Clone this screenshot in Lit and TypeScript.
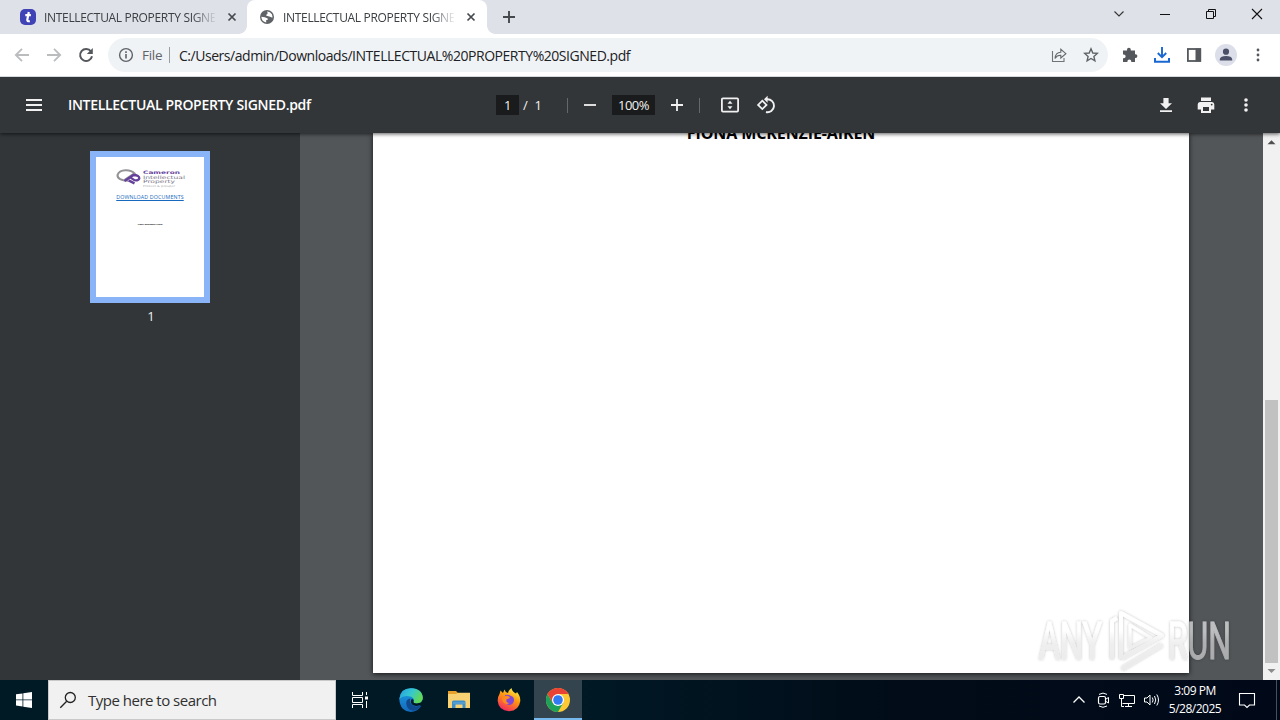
import { LitElement, html, css, svg } from "lit";
import { customElement } from "lit/decorators.js";

const icon = (w: number, h: number, body: unknown, cls = "") =>
  html`<svg class=${cls} width=${w} height=${h} viewBox="0 0 ${w} ${h}" fill="none">${body}</svg>`;

const closeX = svg`<path d="M1.5 1.5L8.5 8.5M8.5 1.5L1.5 8.5" stroke="#45494d" stroke-width="1.7"/>`;

@customElement("browser-tabs")
class BrowserTabs extends LitElement {
  static styles = css`
    :host { display: flex; height: 34px; background: #dee1e8; font: 12px "Open Sans", sans-serif; color: #3c4043; }
    svg { flex: none; display: block; }
    .tab { display: flex; align-items: center; box-sizing: border-box; padding: 0 0 0 20px; width: 247px; height: 34px; }
    .tab.active { width: 240px; padding-left: 12px; background: #fff; border-radius: 8px 8px 0 0; position: relative; }
    .tab.active::before, .tab.active::after { content: ""; position: absolute; bottom: 0; width: 8px; height: 8px; }
    .tab.active::before { left: -8px; background: radial-gradient(circle at 0 0, transparent 7.5px, #fff 8px); }
    .tab.active::after { right: -8px; background: radial-gradient(circle at 100% 0, transparent 7.5px, #fff 8px); }
    .title { width: 171px; margin: 0 12px 0 8px; overflow: hidden; white-space: nowrap; letter-spacing: -0.32px;
      -webkit-mask-image: linear-gradient(90deg, #000 148px, transparent 173px); mask-image: linear-gradient(90deg, #000 148px, transparent 173px); }
    .plus { margin: 10px 0 0 15px; }
    .win { display: flex; margin-left: auto; gap: 32px; padding: 7px 17px 0 0; }
  `;
  render() {
    return html`
      <div class="tab">
        ${icon(16, 16, svg`<rect width="16" height="16" rx="5" fill="#3f43b5"/><path d="M8.8 3L7.3 10.7Q7 12.7 9.8 12.1M5.3 6.2H10.9" stroke="#fff" stroke-width="2.2"/>`)}
        <div class="title">INTELLECTUAL PROPERTY SIGNED.pdf</div>${icon(10, 10, closeX)}
      </div>
      <div class="tab active">
        ${icon(16, 16, svg`<circle cx="8" cy="8" r="7" fill="#5f6368"/><path d="M2.3 7.8L5.7 8.2L8.3 9.2Q9.4 9.7 8.7 10.8L7.2 11.1V13.4Q2.8 12.8 2.3 7.8ZM8 2.4Q11 2.2 12.9 5.2L13.6 8.2Q12.9 9 11.7 8.1L10.3 7.6L7.4 6.8Q6.6 5.6 8.2 5.2L8.7 4.1Z" fill="#fff"/>`)}
        <div class="title">INTELLECTUAL PROPERTY SIGNED.pdf</div>${icon(10, 10, closeX)}
      </div>
      ${icon(14, 14, svg`<path d="M7 1V13M1 7H13" stroke="#45484c" stroke-width="1.9"/>`, "plus")}
      <div class="win">
        ${icon(12, 14, svg`<path d="M1.5 4.5L6 9L10.5 4.5" stroke="#333" stroke-width="1.1"/>`)}
        ${icon(14, 14, svg`<path d="M3 7.5H13" stroke="#111"/>`)}
        ${icon(14, 14, svg`<path d="M3.5 4.5H10.5V11.5H3.5ZM5.5 4.5V2.5H12.5V9.5H10.5" stroke="#111"/>`)}
        ${icon(14, 14, svg`<path d="M3 2L13 12M13 2L3 12" stroke="#111" stroke-width="1.1"/>`)}
      </div>`;
  }
}

@customElement("address-row")
class AddressRow extends LitElement {
  static styles = css`
    :host { display: flex; align-items: center; height: 42px; background: #fff; border-bottom: 1px solid #d5d8dc; font: 14px "Open Sans", sans-serif; color: #202124; }
    svg { flex: none; display: block; }
    .nav { display: flex; gap: 16px; padding-left: 14px; width: 94px; }
    .omni { display: flex; align-items: center; width: 1000px; height: 34px; border-radius: 17px; background: #f0f3f5; box-sizing: border-box; padding: 0 9px 0 10px; white-space: nowrap; }
    .file { color: #5f6368; margin-left: 8px; width: 27px; letter-spacing: -0.3px; font-size: 13.5px; }
    .sep { width: 1px; height: 16px; background: #9a9ea3; margin-right: 9px; }
    .url { flex: 1; letter-spacing: -0.46px; }
    .acts { display: flex; gap: 16px; }
    .right { display: flex; gap: 14px; align-items: center; margin-left: 13px; }
    .avatar { margin-left: -2px; }
  `;
  render() {
    return html`
      <div class="nav">
        ${icon(16, 16, svg`<path d="M15 8H2M8 1.8L1.8 8L8 14.2" stroke="#babcbe" stroke-width="1.8"/>`)}
        ${icon(16, 16, svg`<path d="M1 8H14M8 1.8L14.2 8L8 14.2" stroke="#babcbe" stroke-width="1.8"/>`)}
        ${icon(16, 16, svg`<path d="M13 4.5A6 6 0 1 0 14 9.2" stroke="#54585d" stroke-width="2"/><path d="M14.8 1V7H8.8Z" fill="#54585d"/>`)}
      </div>
      <div class="omni">
        ${icon(16, 16, svg`<circle cx="8" cy="8" r="6.4" stroke="#5f6368" stroke-width="1.4"/><path d="M8 7V11.5M8 4.3V5.9" stroke="#5f6368" stroke-width="1.6"/>`)}
        <span class="file">File</span><span class="sep"></span>
        <span class="url">C:/Users/admin/Downloads/INTELLECTUAL%20PROPERTY%20SIGNED.pdf</span>
        <div class="acts">
          ${icon(16, 16, svg`<path d="M1.5 4V14.5H13V11" stroke="#707478" stroke-width="1.1"/><path d="M4 11.5Q4.4 5.5 9.8 5.2V2.3L14.9 6.7L9.8 11V8.3Q6 8.1 4 11.5Z" stroke="#65696e" stroke-width="1.1"/>`)}
          ${icon(16, 16, svg`<path d="M8 1.8L9.8 6L14.3 6.4L10.9 9.4L11.9 13.8L8 11.5L4.1 13.8L5.1 9.4L1.7 6.4L6.2 6Z" stroke="#5f6368" stroke-width="1.4"/>`)}
        </div>
      </div>
      <div class="right">
        ${icon(18, 18, svg`<path d="M2 4.5H6V3.7A1.9 1.9 0 0 1 9.8 3.7V4.5H14V8.2H14.5A1.8 1.8 0 0 1 14.5 12H14V16H10.3V15.4A1.8 1.8 0 0 0 6.4 15.4V16H2V12.3H2.7A1.9 1.9 0 0 0 2.7 8.4H2Z" fill="#54585d"/>`)}
        ${icon(18, 18, svg`<path d="M9 1V11M4.8 7L9 11.2L13.2 7" stroke="#1967d2" stroke-width="1.9"/><path d="M2 12V15.8H16V12" stroke="#1967d2" stroke-width="2"/>`)}
        ${icon(18, 18, svg`<rect x="2.9" y="3" width="12.4" height="12" stroke="#54585d" stroke-width="1.8"/><rect x="10.5" y="2.5" width="5" height="13" fill="#54585d"/>`)}
        ${icon(22, 22, svg`<circle cx="11" cy="11" r="11" fill="#dcdfe9"/><circle cx="11" cy="7.7" r="3.1" fill="#4b4f67"/><path d="M4.8 16.5V15Q5.5 12 11 12Q16.5 12 17.2 15V16.5Z" fill="#4b4f67"/>`, "avatar")}
        ${icon(14, 16, svg`<circle cx="7" cy="3" r="1.4" fill="#54585d"/><circle cx="7" cy="8" r="1.4" fill="#54585d"/><circle cx="7" cy="13" r="1.4" fill="#54585d"/>`)}
      </div>`;
  }
}

@customElement("pdf-viewer")
class PdfViewer extends LitElement {
  static styles = css`
    :host { display: flex; flex-direction: column; height: 603px; font: 13px "Open Sans", sans-serif; color: #f1f1f1; position: relative; overflow: hidden; }
    svg { flex: none; display: block; }
    .bar { display: grid; grid-template-columns: 496px 1fr auto; align-items: center; height: 56px; background: #323639; box-shadow: 0 1px 4px rgba(0,0,0,.65); position: relative; z-index: 1; }
    .left, .mid, .acts { display: flex; align-items: center; }
    .left { padding-left: 26px; }
    .name { margin-left: 26px; font-size: 14px; font-weight: 600; letter-spacing: -0.32px; white-space: nowrap; color: #fff; line-height: 18px; padding-bottom: 1px; }
    .box { background: #191b1c; height: 20px; line-height: 20px; text-align: center; letter-spacing: -.5px; }
    .pg { width: 23px; }
    .of { margin-left: 4px; width: 44px; white-space: pre; }
    .zoom { width: 43px; margin: 0 14px; }
    .rule { width: 1px; height: 15px; background: #65686b; }
    .minus { margin-left: 14px; }
    .rule2 { margin: 0 20px 0 14px; }
    .rot { margin-left: 16px; }
    .acts { gap: 20px; padding-right: 28px; }
    .more { margin-left: 4px; }
    .main { display: flex; flex: 1; min-height: 0; }
    .side { width: 300px; background: #323639; display: flex; flex-direction: column; align-items: center; box-sizing: border-box; padding-top: 18px; }
    .thumb { box-sizing: border-box; width: 120px; height: 152px; border: 6px solid #8ab4f8; background: #fff; display: flex; flex-direction: column; align-items: center; }
    .thumb svg { margin: 11px 0 0 2px; }
    .link { color: #1769be; font-size: 5.3px; font-weight: 500; line-height: 7px; margin-top: 6px; text-decoration: underline; white-space: nowrap; letter-spacing: .14px; }
    .sig { color: #000; font-weight: 700; font-size: 2.1px; line-height: 4px; margin-top: 22px; white-space: nowrap; }
    .num { margin: 4px 0 0 2px; }
    .canvas { flex: 1; background: #525659; padding-left: 73px; }
    .page { width: 816px; height: 540px; background: #fff; box-shadow: 0 1px 5px rgba(0,0,0,.75); color: #000; display: flex; justify-content: center; }
    .signer { font: 700 16px/22px "Open Sans", sans-serif; margin-top: -11px; letter-spacing: -.1px; white-space: nowrap; }
    .scroll { width: 17px; background: #f1f1f1; display: flex; flex-direction: column; align-items: center; }
    .track { flex: 1; width: 13px; display: flex; align-items: flex-end; }
    .grip { width: 13px; height: 263px; background: #c1c1c1; }
  `;
  render() {
    return html`
      <div class="bar">
        <div class="left">
          ${icon(16, 12, svg`<path d="M0 1H16M0 6H16M0 11H16" stroke="#f1f1f1" stroke-width="2"/>`)}
          <span class="name">INTELLECTUAL PROPERTY SIGNED.pdf</span>
        </div>
        <div class="mid">
          <span class="box pg">1</span><span class="of">/  1</span><span class="rule"></span>
          ${icon(16, 16, svg`<path d="M2 8H14" stroke="#f1f1f1" stroke-width="1.8"/>`, "minus")}
          <span class="box zoom">100%</span>
          ${icon(16, 16, svg`<path d="M2 8H14M8 2V14" stroke="#f1f1f1" stroke-width="1.8"/>`)}
          <span class="rule rule2"></span>
          ${icon(20, 16, svg`<rect x="1.9" y="1.4" width="16.2" height="13.2" rx="1" stroke="#f1f1f1" stroke-width="1.8"/><path d="M10 3.7L12.5 6.7H7.5ZM10 12.3L12.5 9.3H7.5Z" fill="#f1f1f1"/>`)}
          ${icon(20, 20, svg`<path d="M6.3 5.7L10.5 9.9L6.3 14.1L2.1 9.9Z" stroke="#f1f1f1" stroke-width="1.8"/><path d="M9.5 4.2H11A6.5 6.5 0 1 1 10 17" stroke="#f1f1f1" stroke-width="1.9"/><path d="M11.6 .7V7.7L8 4.2Z" fill="#f1f1f1"/>`, "rot")}
        </div>
        <div class="acts">
          ${icon(20, 20, svg`<path d="M7.4 3H12.6V8.2H16L10 14L4 8.2H7.4ZM4 15.2H16V17H4Z" fill="#f1f1f1"/>`)}
          ${icon(20, 20, svg`<path d="M5 2.5H15V6H5ZM4 7H16Q18.3 7 18.3 9.5V14.5H15V18H5V14.5H1.7V9.5Q1.7 7 4 7ZM7 12V16H13V12Z" fill="#f1f1f1" fill-rule="evenodd"/><circle cx="15.7" cy="9.6" r=".9" fill="#323639"/>`)}
          ${icon(12, 20, svg`<circle cx="6" cy="5" r="1.8" fill="#f1f1f1"/><circle cx="6" cy="10" r="1.8" fill="#f1f1f1"/><circle cx="6" cy="15" r="1.8" fill="#f1f1f1"/>`, "more")}
        </div>
      </div>
      <div class="main">
        <div class="side">
          <div class="thumb">
            ${icon(70, 20, svg`
              <path d="M12 12.6Q1.3 12.4 1.5 7Q3 2.3 9.5 2.2Q15.5 2 18.5 5.4L9 11.6" stroke="#939397" stroke-width="2.1"/>
              <path d="M8.5 13L17.5 7Q23.5 7.3 23.3 10.3Q22.5 12.8 18.5 12.2L14.5 9.6M12.5 12.4L18.5 15.4" stroke="#65409b" stroke-width="2.3"/>
              <g font-family="DejaVu Sans, sans-serif" font-size="4.6">
                <text x="27" y="5.8" fill="#67439b" font-weight="700" textLength="37" lengthAdjust="spacingAndGlyphs">Cameron</text>
                <text x="27" y="10.6" fill="#77717f" textLength="42" lengthAdjust="spacingAndGlyphs">Intellectual</text>
                <text x="27" y="15.3" fill="#77717f" textLength="32" lengthAdjust="spacingAndGlyphs">Property</text>
                <text x="27" y="19.2" fill="#aaa" font-size="2.6" textLength="32" lengthAdjust="spacingAndGlyphs">Protect &amp; prosper</text>
              </g>`)}
            <div class="link">DOWNLOAD DOCUMENTS</div>
            <div class="sig">FIONA MCKENZIE-AIKEN</div>
          </div>
          <div class="num">1</div>
        </div>
        <div class="canvas"><div class="page"><div class="signer">FIONA MCKENZIE-AIKEN</div></div></div>
        <div class="scroll">
          ${icon(17, 17, svg`<path d="M4.5 11.3L8.5 7.3L12.5 11.3Z" fill="#505050"/>`)}
          <div class="track"><div class="grip"></div></div>
          ${icon(17, 17, svg`<path d="M4.5 6L8.5 10L12.5 6Z" fill="#8b8b8b"/>`)}
        </div>
      </div>`;
  }
}

@customElement("task-bar")
class TaskBar extends LitElement {
  static styles = css`
    :host { display: flex; height: 40px; background: linear-gradient(90deg, #001a25 0, #001925 45%, #010c18 70%, #010919 100%); font-family: "Open Sans", sans-serif; color: #fff; }
    svg { flex: none; display: block; }
    .cell { width: 48px; display: flex; align-items: center; justify-content: center; }
    .search { width: 288px; box-sizing: border-box; border: 1px solid #c9c9c9; background: #f1f1f1; color: #303030; display: flex; align-items: center; padding-left: 10px; gap: 11px; font-size: 15px; letter-spacing: -.5px; }
    .app { width: 50px; }
    .edge { margin-left: 4px; }
    .apps { display: flex; }
    .on { width: 48px; background: #34444e; box-shadow: inset 0 -2px #76b9ed; }
    .tray { display: flex; align-items: center; margin-left: auto; }
    .tray > svg { margin-right: 7px; }
    .clock { width: 56px; text-align: center; font-size: 12px; line-height: 18px; letter-spacing: -.5px; white-space: nowrap; margin: 0 15px 0 -1px; }
    .peek { width: 1px; height: 40px; background: #465060; margin: 0 3px 0 13px; }
  `;
  render() {
    return html`
      <div class="cell">${icon(16, 16, svg`<path d="M0 2.3L6.5 1.4V7.5H0ZM7.3 1.3L16 0V7.5H7.3ZM0 8.3H6.5V14.5L0 13.6ZM7.3 8.3H16V16L7.3 14.7Z" fill="#fff"/>`)}</div>
      <div class="search">${icon(18, 18, svg`<circle cx="11.3" cy="6.5" r="5" stroke="#222" stroke-width="1.3"/><path d="M7.7 10.2L1.3 16.8" stroke="#222" stroke-width="1.3"/>`)}<span>Type here to search</span></div>
      <div class="apps">
        <div class="cell">${icon(18, 16, svg`<path d="M1.5 0V3.5H11.5V0M1.5 16V12.5H11.5V16M1.5 5.5H11.5V10.5H1.5ZM15.5 0V3M15.5 9V16" stroke="#fff"/><rect x="14" y="4.5" width="3" height="3" fill="#fff"/>`)}</div>
        <div class="cell app"><svg class="edge" width="24" height="24" viewBox="0 0 24 24">
          <defs><linearGradient id="eg" x1="0" y1="0" x2="1" y2=".4"><stop offset="0" stop-color="#249de2"/><stop offset=".55" stop-color="#36c8cf"/><stop offset="1" stop-color="#62d957"/></linearGradient>
          <linearGradient id="eb" x1="0" y1="0" x2="0" y2="1"><stop offset="0" stop-color="#1b9fe3"/><stop offset="1" stop-color="#1469bb"/></linearGradient></defs>
          <path d="M.3 11Q1.5 .2 12 .2Q23.6 .8 23.8 10.3Q23.4 15.4 18 15.5L21.8 18.5Q18 23.9 12 23.9Q1 23.4 .3 11Z" fill="url(#eb)"/>
          <path d="M.3 11Q1.5 .2 12 .2Q23.6 .8 23.8 10.3Q23.4 15.4 17.8 15.5Q13.4 15.4 14.6 13.2Q15.7 10.4 12.2 8.8Q5 6.2 .3 11Z" fill="url(#eg)"/>
          <path d="M11.7 10.5Q6.8 10.8 7.2 16Q8.5 22.4 14.5 22.7Q19.5 22 21.8 18.2Q22.2 17.2 21 17.6Q15 19.8 11.9 15.8Q10.2 12.4 11.7 10.5Z" fill="#10498d"/>
          <path d="M14.7 12.8Q13.4 15.4 17.8 15.5Q19.8 15.4 21 14.8Q21 18.3 17 18Q12.5 17.5 11.8 14Q11.8 11.5 13 10.7Q15 11.5 14.7 12.8Z" fill="#001925"/></svg></div>
        <div class="cell app">${icon(24, 20, svg`<path d="M1 1H9L11 3H22V18H1Z" fill="#e8a12c"/><path d="M1 4H9L11 2.7H23V18H1Z" fill="#f8d272"/><path d="M5 18V12Q5 10.5 6.5 10.5H17Q18.5 10.5 18.5 12V18H15.5V14.5H8.5V18Z" fill="#3c8fcb"/><path d="M6 13H18" stroke="#68aad6"/>`)}</div>
        <div class="cell app"><svg width="24" height="24" viewBox="0 0 24 24">
          <defs><linearGradient id="fx" x1=".8" y1="0" x2=".3" y2="1"><stop offset="0" stop-color="#fff44f"/><stop offset=".45" stop-color="#ff980e"/><stop offset="1" stop-color="#f52663"/></linearGradient></defs>
          <path d="M2.5 6L3.5 2.5L6 5L7.5 1.5Q8 4 11 5Q11.5 2 14.5 0Q15 3.5 19 5.5L20 4Q23.5 8 23.3 13Q22 22.8 12 23.2Q1.5 22.5 .7 13Q.5 9 2.5 6Z" fill="url(#fx)"/>
          <path d="M8 7Q11 6.2 13 7.5Q17.5 8.5 17 13Q15.7 17.3 11.5 17Q7.7 16 7 12.5Z" fill="#8148d8"/><path d="M5 10Q8 6 13 9Q12.5 11 9.5 11.3Q8.5 15 12.5 15Q8 18 5.5 13Z" fill="#ff8a20"/></svg></div>
        <div class="cell on">${icon(24, 24, svg`<circle cx="12" cy="12" r="12" fill="#fcc934"/><path d="M1.6 6A12 12 0 0 0 12 24L17.2 15L6.8 15Z" fill="#1ea25a"/><path d="M1.6 6A12 12 0 0 1 22.4 6H12L6.8 15Z" fill="#ea4335"/><circle cx="12" cy="12" r="6" fill="#fff"/><circle cx="12" cy="12" r="4.8" fill="#317bf2"/>`)}</div>
      </div>
      <div class="tray">
        ${icon(18, 18, svg`<path d="M3.5 11.5L9 6L14.5 11.5" stroke="#fff" stroke-width="1.3"/>`)}
        ${icon(16, 18, svg`<rect x="3.5" y="5.5" width="7" height="7.5" rx="1.5" stroke="#fff" stroke-width="1.2"/><path d="M11 8L13.5 6.5V12L11 10.5M4 3.4Q8 .8 12 3.4M4 15Q8 17.6 12 15" stroke="#fff"/>`)}
        ${icon(18, 18, svg`<path d="M5 4.5H16.5V12.5H4.5M10.5 12.5V15.5M7 15.5H14M1.5 3.5H5.5V7.5H1.5ZM3.5 7.5V15.5H6" stroke="#fff"/>`)}
        ${icon(18, 18, svg`<path d="M1.5 7H4L7 4V14L4 11H1.5Z" stroke="#fff"/><path d="M9.3 6.5Q11 9 9.3 11.5M11.5 5Q14 9 11.5 13M13.8 3.5Q17.2 9 13.8 14.5" stroke="#fff"/>`)}
        <div class="clock">3:09 PM<br>5/28/2025</div>
        ${icon(18, 18, svg`<path d="M1.5 2.5H16.5V14H11.5L9 16.4L6.5 14H1.5Z" stroke="#fff" stroke-width="1.1"/>`)}
        <div class="peek"></div>
      </div>`;
  }
}

@customElement("app-root")
class AppRoot extends LitElement {
  static styles = css`
    :host { display: flex; flex-direction: column; width: 1280px; height: 720px; position: relative; overflow: hidden; }
    .mark { position: absolute; left: 1030px; top: 600px; z-index: 3; }
  `;
  render() {
    return html`
      <browser-tabs></browser-tabs>
      <address-row></address-row>
      <pdf-viewer></pdf-viewer>
      <task-bar></task-bar>
      <svg class="mark" width="250" height="78" viewBox="0 0 250 78">
        <defs><filter id="soft" x="-10%" y="-20%" width="120%" height="140%"><feDropShadow dx="0" dy="0" stdDeviation="1.7" flood-color="#000" flood-opacity=".42"/></filter>
        <linearGradient id="fade" gradientUnits="userSpaceOnUse" x1="0" x2="0" y1="10" y2="70"><stop offset=".35" stop-color="#fff"/><stop offset=".55" stop-color="#e6e6e6"/><stop offset="1" stop-color="#dedede"/></linearGradient></defs>
        <g filter="url(#soft)" font-family="Roboto, sans-serif" font-size="51" fill="url(#fade)" opacity=".62">
          <text x="9" y="59" textLength="63" lengthAdjust="spacingAndGlyphs" stroke="url(#fade)" stroke-width="1">ANY</text>
          <text x="138" y="59" textLength="63" lengthAdjust="spacingAndGlyphs" stroke="url(#fade)" stroke-width="1">RUN</text>
          <g fill="none" stroke="url(#fade)" stroke-width="4" stroke-linejoin="round">
            <path d="M91 59V13L132 35.5L92 58M92 69L132 45"/><path d="M100 48V25L121 38Z" stroke-width="3"/><path d="M87 18L82 21V59"/>
          </g>
        </g>
      </svg>`;
  }
}
